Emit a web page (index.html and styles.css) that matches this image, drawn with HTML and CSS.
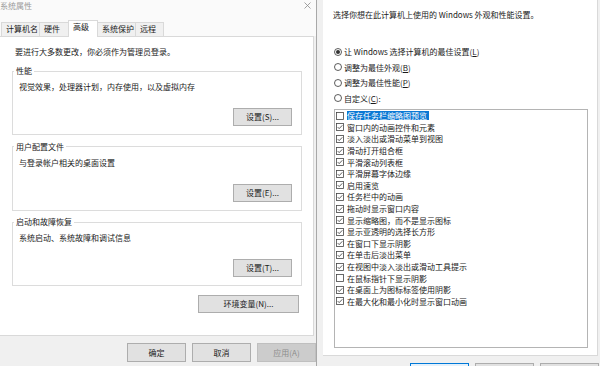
FILE: index.html
```html
<!DOCTYPE html>
<html lang="zh-CN">
<head>
<meta charset="utf-8">
<title>系统属性</title>
<link rel="stylesheet" href="styles.css">
</head>
<body>
<div class="screen">
  <div class="win-left">
    <div class="titlebar">
      <span class="title">系统属性</span>
      <svg class="close" width="7" height="7" viewBox="0 0 7 7"><path d="M0.5 0.5 L6.5 6.5 M6.5 0.5 L0.5 6.5" stroke="#8a8a8a" stroke-width="0.8" fill="none"/></svg>
    </div>
    <div class="tabs">
      <div class="tab tab-w4">计算机名</div>
      <div class="tab tab-w2">硬件</div>
      <div class="tab tab-w2 active">高级</div>
      <div class="tab tab-w4">系统保护</div>
      <div class="tab tab-w2s">远程</div>
    </div>
    <div class="panel">
      <p class="intro">要进行大多数更改，你必须作为管理员登录。</p>
      <fieldset class="group">
        <legend>性能</legend>
        <div class="desc">视觉效果，处理器计划，内存使用，以及虚拟内存</div>
        <div class="actions"><button class="btn">设置(S)...</button></div>
      </fieldset>
      <fieldset class="group">
        <legend>用户配置文件</legend>
        <div class="desc">与登录帐户相关的桌面设置</div>
        <div class="actions"><button class="btn">设置(E)...</button></div>
      </fieldset>
      <fieldset class="group">
        <legend>启动和故障恢复</legend>
        <div class="desc">系统启动、系统故障和调试信息</div>
        <div class="actions"><button class="btn">设置(T)...</button></div>
      </fieldset>
      <div class="env-row"><button class="btn btn-wide">环境变量(N)...</button></div>
    </div>
    <div class="footer">
      <button class="btn">确定</button>
      <button class="btn">取消</button>
      <button class="btn disabled">应用(A)</button>
    </div>
  </div>

  <div class="win-right">
    <div class="rpanel">
      <p class="rintro">选择你想在此计算机上使用的 Windows 外观和性能设置。</p>
      <div class="radios">
        <div class="radio"><svg width="8" height="8" viewBox="0 0 8 8"><circle cx="4" cy="4" r="3.5" fill="#fff" stroke="#333" stroke-width="0.8"/><circle cx="4" cy="4" r="2" fill="#333"/></svg><span>让 Windows 选择计算机的最佳设置(<u>L</u>)</span></div>
        <div class="radio"><svg width="8" height="8" viewBox="0 0 8 8"><circle cx="4" cy="4" r="3.5" fill="#fff" stroke="#333" stroke-width="0.8"/></svg><span>调整为最佳外观(<u>B</u>)</span></div>
        <div class="radio"><svg width="8" height="8" viewBox="0 0 8 8"><circle cx="4" cy="4" r="3.5" fill="#fff" stroke="#333" stroke-width="0.8"/></svg><span>调整为最佳性能(<u>P</u>)</span></div>
        <div class="radio"><svg width="8" height="8" viewBox="0 0 8 8"><circle cx="4" cy="4" r="3.5" fill="#fff" stroke="#333" stroke-width="0.8"/></svg><span>自定义(<u>C</u>):</span></div>
      </div>
      <div class="listbox">
        <div class="row"><svg class="cb" width="8" height="8" viewBox="0 0 8 8"><rect x="0.5" y="0.5" width="7" height="7" fill="#fff" stroke="#444" stroke-width="0.8"/></svg><span class="sel">保存任务栏缩略图预览</span></div>
        <div class="row"><svg class="cb" width="8" height="8" viewBox="0 0 8 8"><rect x="0.5" y="0.5" width="7" height="7" fill="#fff" stroke="#444" stroke-width="0.8"/><path d="M1.7 4.1 L3.2 5.6 L6.3 2.3" stroke="#333" stroke-width="0.8" fill="none"/></svg><span>窗口内的动画控件和元素</span></div>
        <div class="row"><svg class="cb" width="8" height="8" viewBox="0 0 8 8"><rect x="0.5" y="0.5" width="7" height="7" fill="#fff" stroke="#444" stroke-width="0.8"/><path d="M1.7 4.1 L3.2 5.6 L6.3 2.3" stroke="#333" stroke-width="0.8" fill="none"/></svg><span>淡入淡出或滑动菜单到视图</span></div>
        <div class="row"><svg class="cb" width="8" height="8" viewBox="0 0 8 8"><rect x="0.5" y="0.5" width="7" height="7" fill="#fff" stroke="#444" stroke-width="0.8"/><path d="M1.7 4.1 L3.2 5.6 L6.3 2.3" stroke="#333" stroke-width="0.8" fill="none"/></svg><span>滑动打开组合框</span></div>
        <div class="row"><svg class="cb" width="8" height="8" viewBox="0 0 8 8"><rect x="0.5" y="0.5" width="7" height="7" fill="#fff" stroke="#444" stroke-width="0.8"/><path d="M1.7 4.1 L3.2 5.6 L6.3 2.3" stroke="#333" stroke-width="0.8" fill="none"/></svg><span>平滑滚动列表框</span></div>
        <div class="row"><svg class="cb" width="8" height="8" viewBox="0 0 8 8"><rect x="0.5" y="0.5" width="7" height="7" fill="#fff" stroke="#444" stroke-width="0.8"/><path d="M1.7 4.1 L3.2 5.6 L6.3 2.3" stroke="#333" stroke-width="0.8" fill="none"/></svg><span>平滑屏幕字体边缘</span></div>
        <div class="row"><svg class="cb" width="8" height="8" viewBox="0 0 8 8"><rect x="0.5" y="0.5" width="7" height="7" fill="#fff" stroke="#444" stroke-width="0.8"/><path d="M1.7 4.1 L3.2 5.6 L6.3 2.3" stroke="#333" stroke-width="0.8" fill="none"/></svg><span>启用速览</span></div>
        <div class="row"><svg class="cb" width="8" height="8" viewBox="0 0 8 8"><rect x="0.5" y="0.5" width="7" height="7" fill="#fff" stroke="#444" stroke-width="0.8"/><path d="M1.7 4.1 L3.2 5.6 L6.3 2.3" stroke="#333" stroke-width="0.8" fill="none"/></svg><span>任务栏中的动画</span></div>
        <div class="row"><svg class="cb" width="8" height="8" viewBox="0 0 8 8"><rect x="0.5" y="0.5" width="7" height="7" fill="#fff" stroke="#444" stroke-width="0.8"/><path d="M1.7 4.1 L3.2 5.6 L6.3 2.3" stroke="#333" stroke-width="0.8" fill="none"/></svg><span>拖动时显示窗口内容</span></div>
        <div class="row"><svg class="cb" width="8" height="8" viewBox="0 0 8 8"><rect x="0.5" y="0.5" width="7" height="7" fill="#fff" stroke="#444" stroke-width="0.8"/><path d="M1.7 4.1 L3.2 5.6 L6.3 2.3" stroke="#333" stroke-width="0.8" fill="none"/></svg><span>显示缩略图，而不是显示图标</span></div>
        <div class="row"><svg class="cb" width="8" height="8" viewBox="0 0 8 8"><rect x="0.5" y="0.5" width="7" height="7" fill="#fff" stroke="#444" stroke-width="0.8"/><path d="M1.7 4.1 L3.2 5.6 L6.3 2.3" stroke="#333" stroke-width="0.8" fill="none"/></svg><span>显示亚透明的选择长方形</span></div>
        <div class="row"><svg class="cb" width="8" height="8" viewBox="0 0 8 8"><rect x="0.5" y="0.5" width="7" height="7" fill="#fff" stroke="#444" stroke-width="0.8"/><path d="M1.7 4.1 L3.2 5.6 L6.3 2.3" stroke="#333" stroke-width="0.8" fill="none"/></svg><span>在窗口下显示阴影</span></div>
        <div class="row"><svg class="cb" width="8" height="8" viewBox="0 0 8 8"><rect x="0.5" y="0.5" width="7" height="7" fill="#fff" stroke="#444" stroke-width="0.8"/><path d="M1.7 4.1 L3.2 5.6 L6.3 2.3" stroke="#333" stroke-width="0.8" fill="none"/></svg><span>在单击后淡出菜单</span></div>
        <div class="row"><svg class="cb" width="8" height="8" viewBox="0 0 8 8"><rect x="0.5" y="0.5" width="7" height="7" fill="#fff" stroke="#444" stroke-width="0.8"/><path d="M1.7 4.1 L3.2 5.6 L6.3 2.3" stroke="#333" stroke-width="0.8" fill="none"/></svg><span>在视图中淡入淡出或滑动工具提示</span></div>
        <div class="row"><svg class="cb" width="8" height="8" viewBox="0 0 8 8"><rect x="0.5" y="0.5" width="7" height="7" fill="#fff" stroke="#444" stroke-width="0.8"/></svg><span>在鼠标指针下显示阴影</span></div>
        <div class="row"><svg class="cb" width="8" height="8" viewBox="0 0 8 8"><rect x="0.5" y="0.5" width="7" height="7" fill="#fff" stroke="#444" stroke-width="0.8"/><path d="M1.7 4.1 L3.2 5.6 L6.3 2.3" stroke="#333" stroke-width="0.8" fill="none"/></svg><span>在桌面上为图标标签使用阴影</span></div>
        <div class="row"><svg class="cb" width="8" height="8" viewBox="0 0 8 8"><rect x="0.5" y="0.5" width="7" height="7" fill="#fff" stroke="#444" stroke-width="0.8"/><path d="M1.7 4.1 L3.2 5.6 L6.3 2.3" stroke="#333" stroke-width="0.8" fill="none"/></svg><span>在最大化和最小化时显示窗口动画</span></div>
      </div>
    </div>
    <div class="rfooter">
      <button class="btn default" aria-label="确定"></button>
      <button class="btn" aria-label="取消"></button>
      <button class="btn" aria-label="应用"></button>
    </div>
  </div>
</div>
</body>
</html>
```
FILE: styles.css
```css
html, body {
  margin: 0;
  padding: 0;
}
body {
  font-family: "Noto Sans CJK SC", "Noto Sans", "DejaVu Sans", sans-serif;
  font-size: 8px;
  color: #1a1a1a;
}
.screen {
  display: flex;
  width: 600px;
  height: 366px;
  overflow: hidden;
  background: #f0f0f0;
}

/* ---------- left window ---------- */
.win-left {
  width: 316px;
  flex: none;
  display: flex;
  flex-direction: column;
  background: #f0f0f0;
}
.titlebar {
  height: 15px;
  flex: none;
  display: flex;
  align-items: center;
  justify-content: space-between;
  background: #fafafa;
  padding: 0 5px 0 0;
  color: #9a9a9a;
}
.title {
  line-height: 10px;
  margin-top: -3px;
}
.close {
  margin-top: -4px;
}
.tabs {
  height: 21px;
  flex: none;
  display: flex;
  align-items: flex-end;
  padding-left: 1px;
  background: #fafafa;
}
.tab {
  height: 14px;
  box-sizing: border-box;
  border: 1px solid #d9d9d9;
  border-bottom: none;
  margin-left: -1px;
  padding-left: 4px;
  line-height: 12px;
  background: #f0f0f0;
  white-space: nowrap;
}
.tab:first-child { margin-left: 0; }
.tab-w4 { width: 39px; }
.tab-w2 { width: 30px; }
.tab-w2s { width: 29px; }
.tab.active {
  height: 17px;
  background: #fff;
  margin-bottom: -1px;
  position: relative;
  z-index: 1;
}
.panel {
  height: 300px;
  flex: none;
  box-sizing: border-box;
  background: #fff;
  border: 1px solid #d9d9d9;
  border-left: none;
  margin-right: 2px;
  padding: 0 11px 0 12px;
}
.intro {
  margin: 10px 0 0 3px;
  line-height: 10px;
}
.group {
  margin: 9px 0 0;
  padding: 0 9px 8px 1px;
  border: 1px solid #dcdcdc;
  min-width: 0;
}
.group + .group {
  margin-top: 6.5px;
}
.group legend {
  padding: 0 2px;
  line-height: 10px;
}
.desc {
  margin: 6px 0 0 5px;
  line-height: 10px;
}
.actions {
  display: flex;
  justify-content: flex-end;
  margin-top: 16px;
}
.btn {
  width: 59px;
  height: 18px;
  box-sizing: border-box;
  border: 1px solid #adadad;
  background: #e1e1e1;
  font-family: inherit;
  font-size: 8px;
  color: #1a1a1a;
  padding: 0;
  line-height: 16px;
  flex: none;
}
.btn-wide {
  width: 101px;
}
.env-row {
  display: flex;
  justify-content: flex-end;
  margin: 9px 3px 0 0;
}
.footer {
  flex: 1;
  display: flex;
  gap: 6px;
  padding: 7px 0 0 127px;
}
.footer .btn {
  height: 19px;
}
.btn.disabled {
  background: #cccccc;
  border-color: #bfbfbf;
  color: #8c8c8c;
}

/* ---------- right window ---------- */
.win-right {
  flex: 1;
  display: flex;
  flex-direction: column;
  border-left: 1px solid #a8a8a8;
  background: #f0f0f0;
}
.rpanel {
  height: 356px;
  flex: none;
  box-sizing: border-box;
  margin-left: 6px;
  width: 275px;
  background: #fff;
  border-right: 1px solid #d9d9d9;
  border-bottom: 1px solid #d9d9d9;
  padding: 10px 0 0 10px;
}
.rintro {
  margin: 0;
  line-height: 10px;
  white-space: nowrap;
}
.radios {
  margin: 24px 0 0 1px;
}
.radio {
  height: 15.5px;
  display: flex;
  align-items: center;
  gap: 2px;
  white-space: nowrap;
}
.radio svg {
  flex: none;
}
.radio u {
  text-decoration-thickness: 0.6px;
  text-underline-offset: 1px;
}
.listbox {
  margin: 3px 0 0 1px;
  width: 254px;
  height: 239px;
  box-sizing: border-box;
  border: 1px solid #b4b4b4;
  background: #fff;
}
.row {
  height: 11.6px;
  display: flex;
  align-items: center;
  white-space: nowrap;
}
.cb {
  flex: none;
  margin: 0 3px 0 1px;
}
.sel {
  background: #0a78d4;
  color: #fff;
  line-height: 9px;
  padding-right: 2px;
}
.rfooter {
  flex: 1;
  display: flex;
  gap: 6px;
  padding: 7px 0 0 93px;
}
.rfooter .btn {
  height: 19px;
}
.btn.default {
  border-color: #0078d7;
  background: #e5f1fb;
}
```
